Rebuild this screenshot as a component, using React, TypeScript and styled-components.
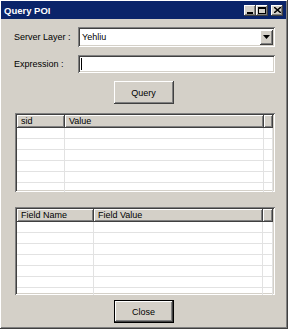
import React from 'react'
import styled, { createGlobalStyle } from 'styled-components'

const GlobalStyle = createGlobalStyle`
  html, body {
    margin: 0;
    padding: 0;
    background: #d4d0c8;
  }
  * {
    box-sizing: border-box;
  }
`

const raised = `
  box-shadow: inset -1px -1px #404040, inset 1px 1px #ffffff,
    inset -2px -2px #808080, inset 2px 2px #d4d0c8;
`

const sunken = `
  box-shadow: inset 1px 1px #808080, inset -1px -1px #ffffff,
    inset 2px 2px #404040, inset -2px -2px #d4d0c8;
`

const Window = styled.div`
  width: 288px;
  height: 329px;
  padding: 1px 2px 0 1px;
  background: #d4d0c8;
  font-family: 'Liberation Sans', Arial, sans-serif;
  font-size: 9px;
  color: #000;
  display: flex;
  flex-direction: column;
  box-shadow: inset -1px -1px #404040, inset 1px 1px #ffffff,
    inset -2px -2px #808080;
`

const TitleBar = styled.div`
  height: 18px;
  background: #0a246a;
  display: flex;
  align-items: center;
  padding: 0 3px 0 3px;
`

const TitleText = styled.span`
  flex: 1;
  color: #fff;
  font-weight: bold;
  font-size: 9.5px;
`

const TitleButtons = styled.div`
  display: flex;
  align-items: center;
`

const CaptionButton = styled.div<{ $gap?: boolean }>`
  width: 12px;
  height: 11px;
  background: #d4d0c8;
  margin-left: ${(p) => (p.$gap ? '3px' : '0')};
  display: flex;
  align-items: center;
  justify-content: center;
  ${raised}
`

const Body = styled.div`
  flex: 1;
  display: flex;
  flex-direction: column;
  padding: 8px 11px 0 13px;
`

const FormRow = styled.div<{ $h: number }>`
  display: flex;
  align-items: center;
  height: ${(p) => p.$h}px;
  margin-bottom: 8px;
`

const Label = styled.label`
  width: 64px;
`

const Combo = styled.div`
  flex: 1;
  height: 100%;
  background: #fff;
  display: flex;
  align-items: center;
  padding: 2px 2px 2px 4px;
  ${sunken}
`

const ComboText = styled.span`
  flex: 1;
`

const DropButton = styled.div`
  width: 13px;
  height: 15px;
  background: #d4d0c8;
  display: flex;
  align-items: center;
  justify-content: center;
  ${raised}
`

const TextInput = styled.div`
  flex: 1;
  height: 100%;
  background: #fff;
  padding: 3px 0 3px 3px;
  ${sunken}
`

const Caret = styled.div`
  width: 1px;
  height: 100%;
  background: #000;
`

const Button = styled.div<{ $default?: boolean }>`
  align-self: center;
  width: 60px;
  height: 23px;
  margin-left: -2px;
  display: flex;
  align-items: center;
  justify-content: center;
  ${(p) =>
    p.$default
      ? `box-shadow: inset 0 0 0 1px #000, inset -2px -2px #404040, inset 2px 2px #ffffff,
    inset -3px -3px #808080;`
      : raised}
`

const ListView = styled.div<{ $h: number; $mt: number }>`
  height: ${(p) => p.$h}px;
  margin-top: ${(p) => p.$mt}px;
  margin-left: 1px;
  padding: 2px;
  background: #fff;
  overflow: hidden;
  display: flex;
  flex-direction: column;
  ${sunken}
`

const Header = styled.div`
  display: flex;
  height: 13px;
  flex-shrink: 0;
`

const HeaderCell = styled.div<{ $w?: number }>`
  ${(p) => (p.$w ? `width: ${p.$w}px;` : 'flex: 1;')}
  background: #d4d0c8;
  padding: 1px 0 0 4px;
  line-height: 11px;
  white-space: nowrap;
  ${raised}
`

const Row = styled.div`
  display: flex;
  height: 11px;
  flex-shrink: 0;
  border-bottom: 1px solid #e2e2e2;
`

const Cell = styled.div<{ $w?: number }>`
  ${(p) => (p.$w ? `width: ${p.$w}px;` : 'flex: 1;')}
  border-right: 1px solid #e2e2e2;
`

const Footer = styled.div`
  display: flex;
  justify-content: center;
  margin-top: 5px;
`

type Column = { title: string; width: number }

const List: React.FC<{ columns: Column[]; height: number; top: number; rows: number }> = ({
  columns,
  height,
  top,
  rows,
}) => (
  <ListView $h={height} $mt={top}>
    <Header>
      {columns.map((c) => (
        <HeaderCell key={c.title} $w={c.width}>
          {c.title}
        </HeaderCell>
      ))}
      <HeaderCell />
    </Header>
    {Array.from({ length: rows }).map((_, i) => (
      <Row key={i}>
        {columns.map((c) => (
          <Cell key={c.title} $w={c.width} />
        ))}
        <Cell />
      </Row>
    ))}
  </ListView>
)

const App: React.FC = () => {
  return (
    <>
      <GlobalStyle />
      <Window>
        <TitleBar>
          <TitleText>Query POI</TitleText>
          <TitleButtons>
            <CaptionButton>
              <svg width="6" height="2" viewBox="0 0 6 2" style={{ marginTop: 5 }}>
                <rect width="6" height="2" fill="#000" />
              </svg>
            </CaptionButton>
            <CaptionButton>
              <svg width="8" height="7" viewBox="0 0 8 7">
                <rect x="0.5" y="0.5" width="7" height="6" fill="none" stroke="#000" />
                <rect x="0" y="0" width="8" height="2" fill="#000" />
              </svg>
            </CaptionButton>
            <CaptionButton $gap>
              <svg width="7" height="6" viewBox="0 0 7 6">
                <path d="M0 0 L7 6 M7 0 L0 6" stroke="#000" strokeWidth="1.5" />
              </svg>
            </CaptionButton>
          </TitleButtons>
        </TitleBar>
        <Body>
          <FormRow $h={20}>
            <Label>Server Layer :</Label>
            <Combo>
              <ComboText>Yehliu</ComboText>
              <DropButton>
                <svg width="7" height="4" viewBox="0 0 7 4">
                  <path d="M0 0 H7 L3.5 4 Z" fill="#000" />
                </svg>
              </DropButton>
            </Combo>
          </FormRow>
          <FormRow $h={18}>
            <Label>Expression :</Label>
            <TextInput>
              <Caret />
            </TextInput>
          </FormRow>
          <Button>Query</Button>
          <List
            columns={[
              { title: 'sid', width: 48 },
              { title: 'Value', width: 199 },
            ]}
            height={79}
            top={9}
            rows={6}
          />
          <List
            columns={[
              { title: 'Field Name', width: 77 },
              { title: 'Field Value', width: 169 },
            ]}
            height={88}
            top={15}
            rows={7}
          />
          <Footer>
            <Button $default>Close</Button>
          </Footer>
        </Body>
      </Window>
    </>
  )
}

export default App
